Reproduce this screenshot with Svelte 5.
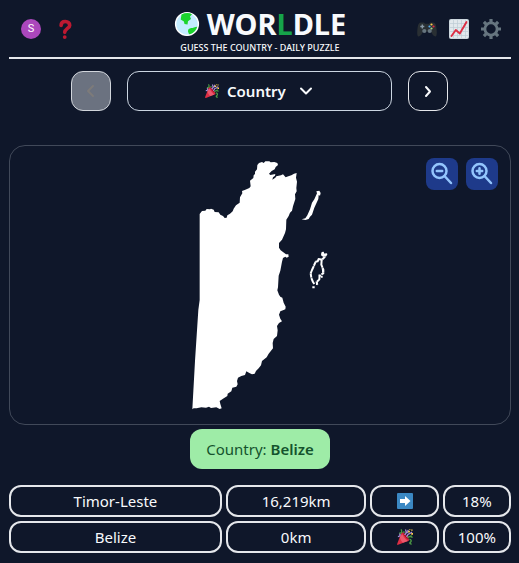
<script>
  const guesses = [
    { country: 'Timor-Leste', distance: '16,219km', icon: 'arrow', label: 'East', percent: '18%' },
    { country: 'Belize', distance: '0km', icon: 'party', label: 'Correct', percent: '100%' }
  ];
  let round = $state('country');
</script>

{#snippet party(size)}
  <svg width={size} height={size} viewBox="0 0 36 36" aria-hidden="true">
    <path fill="#dd2e44" d="M11.6 7.6 9.2 10 .3 33.6c-.5 1.500.7 2.600 2.100 2.100L26.500 26.500c1.300-2.500-1.500-7.800-5.600-12.200S13.300 6.600 11.600 7.600z"/>
    <path fill="#ea596e" d="M12 12c1.500 4 8.500 13 12.500 15L13 31C9 27 7 22 6.500 18z"/>
    <path fill="#a0041e" d="M12 9c4 1 11 8 13 15l-4-4c-3-4-6-7-9-11z"/>
    <path fill="none" stroke="#aa8dd8" stroke-width="3" d="M17 13c5-3 4-8 2-12M2 17c5 0 7-4 3-7M22 8c3-1 4-3 2-6"/>
    <path fill="none" stroke="#4d9c45" stroke-width="3" d="M5 9c6 1 7-3 4-8M24 20c3-4 7-4 11-1M28 23c5 1 5 5 2 7s0 4 3 4"/>
    <path fill="none" stroke="#aa8dd8" stroke-width="3" d="M21 17c5-1 1-5 6-6s3-3 7-4"/>
    <path fill="#ffcc4d" d="M25 4h4v4h-4zM32 1h3v3h-3zM32 9h4v4h-4zM28 0h2v2h-2z"/>
    <path fill="#4d9c45" d="M14 5h3v4h-3zM30 14h3v3h-3z"/>
  </svg>
{/snippet}

<main>
  <header>
    <div class="side">
      <button class="icon avatar" aria-label="Account">S</button>
      <button class="icon" aria-label="How to play">
        <svg width="20" height="20" viewBox="0 0 36 36" aria-hidden="true">
          <path fill="none" stroke="#be1931" stroke-width="6.500" stroke-linecap="round" d="M11 11.500C11 7 14 4.500 18.500 4.500c5 0 8 3 8 7 0 5-9 6-9 12.500"/>
          <circle cx="17.500" cy="32.500" r="3.400" fill="#be1931"/>
        </svg>
      </button>
    </div>
    <div class="brand">
      <h1>
        <svg width="26" height="26" viewBox="0 0 26 26" aria-hidden="true">
          <circle cx="13" cy="13" r="11.400" fill="#c3ecff" stroke="#fff" stroke-width="1.400"/>
          <path fill="#1bd42c" d="M7.500 3.600C11 1.800 15 1.600 18 3.200l-2 2.300 1 2.500-3 2.300-.5 3.200-3-.4-.6-2.600-3.200-2z"/>
          <path fill="#1bd42c" d="M23.200 15.700c-2.500.2-4 1.300-6 1.300-2 .3-3.400 1.400-3.200 3.500l1 2.700c4-.6 7-3.500 8.200-7.500z"/>
        </svg>
        <span>WOR<em>L</em>DLE</span>
      </h1>
      <p>GUESS THE COUNTRY - DAILY PUZZLE</p>
    </div>
    <div class="side end">
      <button class="icon" aria-label="More games">
        <svg width="20" height="20" viewBox="0 0 20 20" aria-hidden="true">
          <path fill="#292f33" d="M4 3.500h3l1 1.300h4l1-1.300h3c2 0 2.800 1.500 3.300 4.500.6 3.500 1 9.500-.8 9.500-1.800 0-3.500-2.500-4.500-5h-8c-1 2.500-2.700 5-4.500 5-1.800 0-1.400-6-.8-9.500C1.200 5 2 3.500 4 3.500z"/>
          <path stroke="#8899a6" stroke-width="1.400" d="M3.300 7.500h4M5.300 5.500v4"/>
          <circle cx="7.300" cy="12" r="2.100" fill="#66757f"/><circle cx="12.700" cy="12" r="2.100" fill="#66757f"/>
          <circle cx="14.500" cy="5.500" r="1.100" fill="#ffcc4d"/><circle cx="16.500" cy="7.500" r="1.100" fill="#dd2e44"/>
          <circle cx="12.500" cy="7.500" r="1.100" fill="#55acee"/><circle cx="14.500" cy="9.500" r="1.100" fill="#a6d388"/>
        </svg>
      </button>
      <button class="icon" aria-label="Statistics">
        <svg width="20" height="20" viewBox="0 0 20 20" aria-hidden="true">
          <rect width="20" height="20" rx="2" fill="#ccd6dd"/>
          <rect x="1" y="1" width="18" height="18" rx="1" fill="#e1e8ed"/>
          <path stroke="#bdcbd4" stroke-width=".7" d="M4.500 1v18M8.500 1v18M12.500 1v18M16.500 1v18M1 4.500h18M1 8.500h18M1 12.500h18M1 16.500h18"/>
          <path fill="none" stroke="#dd2e44" stroke-width="1.900" stroke-linecap="round" stroke-linejoin="round" d="m2.500 17 4.300-6 4 3.500L17.500 3"/>
        </svg>
      </button>
      <button class="icon" aria-label="Settings">
        <svg width="20" height="20" viewBox="0 0 20 20" aria-hidden="true">
          <g stroke="#66757f" stroke-width="3.200">
            <path d="M10 0v4M10 16v4M0 10h4M16 10h4M2.900 2.900l2.900 2.900M14.200 14.200l2.900 2.900M2.900 17.100l2.900-2.900M14.200 5.800l2.900-2.900"/>
            <circle cx="10" cy="10" r="6.100" fill="none" stroke-width="2.800"/>
          </g>
        </svg>
      </button>
    </div>
  </header>

  <nav aria-label="Rounds">
    <button class="step" disabled aria-label="Previous round">
      <svg width="16" height="16" viewBox="0 0 16 16" aria-hidden="true"><path d="m10 3-5 5 5 5"/></svg>
    </button>
    <div class="round">
      {@render party(14)}
      <select aria-label="Round" bind:value={round}>
        <option value="country">Country</option>
      </select>
      <svg class="caret" width="16" height="16" viewBox="0 0 16 16" aria-hidden="true"><path d="m3 5.500 5 5 5-5"/></svg>
    </div>
    <button class="step" aria-label="Next round">
      <svg width="16" height="16" viewBox="0 0 16 16" aria-hidden="true"><path d="m6 4 4 4.500-4 4.500"/></svg>
    </button>
  </nav>

  <section class="map" aria-label="Country outline">
    <svg width="140" height="252" viewBox="30 27 420 756" fill="#fff" aria-hidden="true">
      <path d="M59 192 66 183 76 182 80 177 90 178 93 176 101 179 104 186 116 187 121 194 129 198 134 204 140 203 142 196 150 191 158 184 161 176 168 166 179 158 180 142 187 130 186 123 196 119 208 114 212 109 210 92 220 84 221 76 225 72 225 65 231 58 232 45 237 39 246 36 251 39 256 34 268 34 272 37 283 36 292 39 294 45 287 51 284 58 275 63 267 71 271 75 286 72 285 77 279 82 277 89 286 83 289 79 303 76 309 73 317 82 325 79 334 76 342 71 350 69 348 83 351 95 349 114 350 124 345 133 346 147 339 169 336 182 330 188 326 198 319 209 318 238 315 249 306 269 297 279 297 293 302 301 312 308 318 313 325 313 326 320 320 323 316 320 309 324 306 335 301 362 296 377 294 412 292 421 297 434 301 440 307 443 311 458 317 470 316 478 309 481 301 484 297 494 301 506 306 514 297 519 291 528 293 541 291 558 281 567 278 579 279 595 266 611 260 622 246 633 243 646 236 655 228 663 224 671 216 673 208 669 199 664 195 675 184 678 174 683 171 693 173 703 169 710 157 713 154 724 143 731 142 738 129 746 119 753 121 762 125 775 119 777 109 772 93 774 87 770 78 773 64 772 50 775 41 775 37 778 45 633 55 480 59 450z"/>
      <path d="m409 124 9-2 4 7-2 8-4-2-1 12-12 26-7 21-6 6-4 7-10 3-11-2 11-3 6-9 8-18 6-20 7-10 8-18z"/>
      <path fill="none" stroke="#fff" stroke-width="6" stroke-linejoin="round" stroke-dasharray="24 1 12 1" d="m427 306 4 8 8-1-5 8-8 8-10-2-3 7-6 1-6 14-5 11-4 10 2 14 5 12 4 6M425 330l-1 14 6 15v11l-6 3M419 374l-1 14-8 8 2 8"/>
      <path d="m424 308 8-2-1 7 8 0-9 8-7-5zM425 354l7 4 0 8-5 4zM416 374h7l-1 6-5 1zM423 377h5v6h-5zM397 409h7v6h-7zM408 398l5-1-1 9-4-2z"/>
    </svg>
    <div class="zoom">
      <button aria-label="Zoom out">
        <svg width="24" height="24" viewBox="0 0 24 24" aria-hidden="true"><circle cx="9.500" cy="9" r="7"/><path d="M6.800 9h5.400M14.500 14l6.500 7"/></svg>
      </button>
      <button aria-label="Zoom in">
        <svg width="24" height="24" viewBox="0 0 24 24" aria-hidden="true"><circle cx="9.500" cy="9" r="7"/><path d="M6.800 9h5.400M9.500 6.300v5.400M14.500 14l6.500 7"/></svg>
      </button>
    </div>
  </section>

  <p class="answer">Country: <b>Belize</b></p>

  <table aria-label="Guesses">
    <tbody>
      {#each guesses as guess}
        <tr>
          <td>{guess.country}</td>
          <td>{guess.distance}</td>
          <td aria-label={guess.label}>
            {#if guess.icon === 'arrow'}
              <svg width="16" height="16" viewBox="0 0 16 16" aria-hidden="true">
                <rect width="16" height="16" rx="1" fill="#3b88c3"/>
                <path fill="#fff" d="M3 6h5V3l5.500 5L8 13v-3H3z"/>
              </svg>
            {:else}
              {@render party(16)}
            {/if}
          </td>
          <td>{guess.percent}</td>
        </tr>
      {/each}
    </tbody>
  </table>
</main>

<style>
  :global(body) {
    margin: 0;
    background: #0f172a;
  }
  main {
    display: flex;
    flex-direction: column;
    max-width: 512px;
    margin: 0 auto;
    padding: 0 8px 10px 9px;
    color: #f8fafc;
    font: 16px/24px "Noto Sans", "Open Sans", sans-serif;
  }
  svg {
    display: block;
    flex: none;
  }
  button {
    display: flex;
    align-items: center;
    justify-content: center;
    padding: 0;
    border: 0;
    background: none;
    color: inherit;
    font: inherit;
    cursor: pointer;
  }
  header {
    display: flex;
    align-items: center;
    justify-content: space-between;
    height: 57px;
    border-bottom: 2px solid #e5e7eb;
  }
  .side {
    display: flex;
    flex: 1 1 0;
    gap: 14px;
    padding: 0 12px;
  }
  .end {
    justify-content: flex-end;
    gap: 12px;
    padding: 0 10px 0 14px;
  }
  .icon {
    width: 20px;
    height: 20px;
  }
  .avatar {
    border-radius: 50%;
    background: #ab47bc;
    color: #fff;
    font: 11px/20px Roboto, sans-serif;
  }
  .brand {
    display: flex;
    flex-direction: column;
    align-items: center;
    padding-top: 2px;
  }
  h1 {
    display: flex;
    align-items: center;
    gap: 7px;
    margin: 0;
    font-size: 29px;
    line-height: 36px;
    font-weight: 700;
  }
  em {
    color: #16a34a;
    font-style: normal;
  }
  .brand p {
    margin: 0;
    font-size: 9px;
    line-height: 12px;
    font-weight: 500;
    white-space: nowrap;
  }
  nav {
    display: flex;
    justify-content: center;
    gap: 16px;
    padding: 12px 63px 34px 62px;
  }
  .step,
  .round {
    box-sizing: border-box;
    height: 40px;
    border: 1px solid #e5e7eb;
    border-radius: 12px;
  }
  .step {
    width: 40px;
    flex: none;
  }
  .step:disabled {
    border-color: #d1d5db;
    background: #6b7280;
    color: #7d7b7a;
  }
  .step path,
  .caret path {
    fill: none;
    stroke: currentColor;
    stroke-width: 2;
    stroke-linecap: round;
    stroke-linejoin: round;
  }
  .round {
    display: flex;
    flex: 1;
    align-items: center;
    justify-content: center;
    gap: 8px;
    border-color: #cbd5e1;
  }
  select {
    appearance: none;
    margin: 0 4px 0 0;
    padding: 0;
    border: 0;
    background: none;
    color: inherit;
    font: 600 15px/24px "Noto Sans", "Open Sans", sans-serif;
  }
  .caret {
    pointer-events: none;
  }
  .map {
    position: relative;
    display: flex;
    align-items: center;
    justify-content: center;
    box-sizing: border-box;
    height: 280px;
    border: 1px solid #414959;
    border-radius: 16px;
  }
  .zoom {
    position: absolute;
    top: 12px;
    right: 12px;
    display: flex;
    gap: 8px;
  }
  .zoom button {
    width: 32px;
    height: 32px;
    border-radius: 8px;
    background: #1e3a8a;
  }
  .zoom svg {
    fill: none;
    stroke: #93c5fd;
    stroke-width: 2.5;
    stroke-linecap: round;
  }
  .answer {
    align-self: center;
    margin: 4px 0 16px;
    padding: 8px 16px;
    border-radius: 12px;
    background: #9eeca7;
    color: #14532d;
    font-size: 15px;
  }
  .answer b {
    font-weight: 600;
  }
  table,
  tbody {
    display: grid;
    gap: 4px;
  }
  tr {
    display: grid;
    grid-template-columns: repeat(7, minmax(0, 1fr));
    gap: 4px;
  }
  td {
    display: flex;
    align-items: center;
    justify-content: center;
    box-sizing: border-box;
    height: 32px;
    padding: 0;
    border: 2px solid #e5e7eb;
    border-radius: 12px;
    font-size: 15px;
  }
  td:nth-child(1) {
    grid-column: span 3;
  }
  td:nth-child(2) {
    grid-column: span 2;
  }
</style>
